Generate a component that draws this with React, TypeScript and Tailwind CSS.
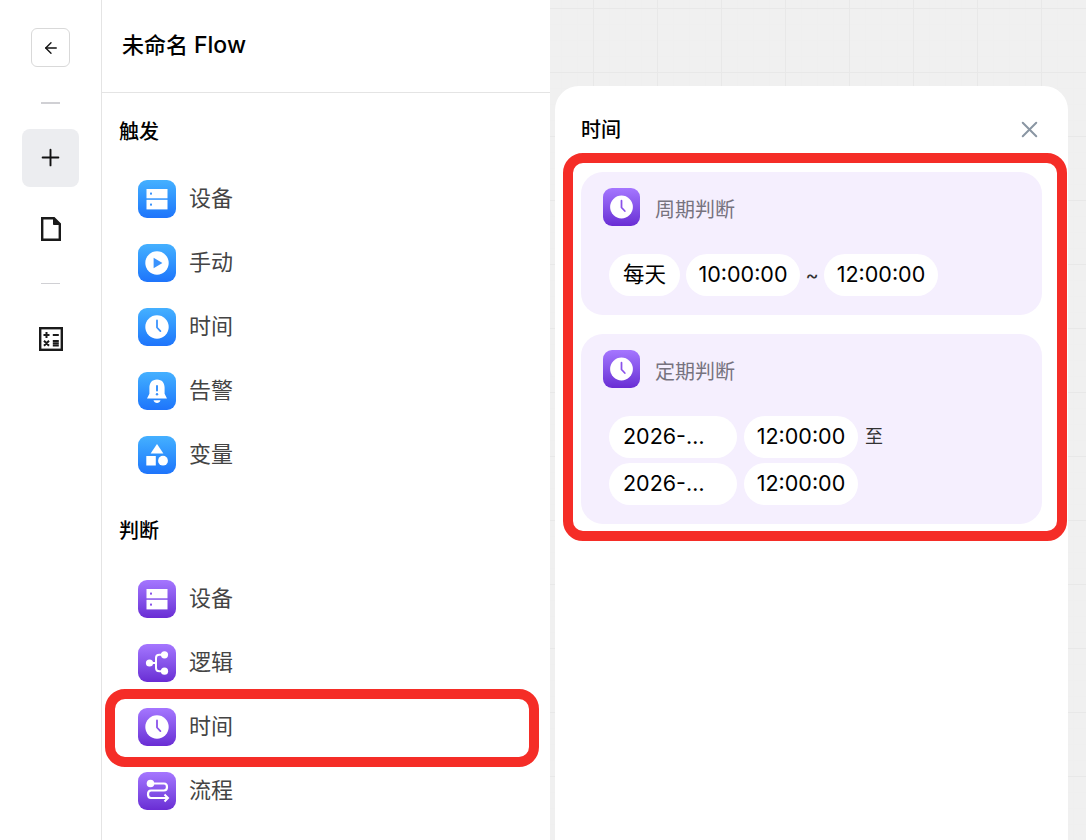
import { ArrowLeft, Plus, X } from "lucide-react";
import type { ReactNode } from "react";

const FONT = "font-['Inter','Noto_Sans_CJK_SC',sans-serif]";

type Tone = "blue" | "purple";

function IconTile({ tone, className, children }: { tone: Tone; className: string; children: ReactNode }) {
	const bg = tone === "blue" ? "bg-gradient-to-b from-[#45b0ff] to-[#1f74fb]" : "bg-gradient-to-b from-[#a576ff] to-[#6a2cd4]";
	return (
		<div className={`flex shrink-0 items-center justify-center rounded-[9px] ${bg} ${className}`}>
			<svg viewBox="0 0 38 38" className="h-full w-full">
				{children}
			</svg>
		</div>
	);
}

function ClockGlyph({ tone }: { tone: Tone }) {
	const c = tone === "blue" ? "#3a93fd" : "#8a52ea";
	return (
		<>
			<circle cx="19" cy="19" r="11.7" fill="#fff" />
			<path d="M19 12.5v7l3.4 3.6" fill="none" stroke={c} strokeWidth="1.8" strokeLinecap="round" strokeLinejoin="round" />
		</>
	);
}

function ServerGlyph({ tone }: { tone: Tone }) {
	const c = tone === "blue" ? "#3a93fd" : "#8a52ea";
	return (
		<>
			<rect x="8.5" y="9" width="21" height="9.3" fill="#fff" />
			<rect x="8.5" y="19.8" width="21" height="9.6" fill="#fff" />
			<rect x="12" y="12.6" width="2" height="2" fill={c} />
			<rect x="12" y="23.6" width="2" height="2" fill={c} />
		</>
	);
}

function PlayGlyph() {
	return (
		<>
			<circle cx="19" cy="19" r="11.7" fill="#fff" />
			<path d="M15.6 13.8 24.4 19l-8.8 5.2z" fill="#3a93fd" />
		</>
	);
}

function BellGlyph() {
	return (
		<>
			<path d="M19 7.500c-5 0-7.600 3.600-7.600 8v6.200L9 26.600h20l-2.400-4.900v-6.200c0-4.400-2.600-8-7.600-8z" fill="#fff" />
			<path d="M15.500 28.200h7c-.5 1.800-1.900 2.800-3.500 2.800s-3-1-3.500-2.800z" fill="#fff" />
			<rect x="18" y="13" width="2" height="6.500" rx="1" fill="#3a93fd" />
			<circle cx="19" cy="22.200" r="1.200" fill="#3a93fd" />
		</>
	);
}

function ShapesGlyph() {
	return (
		<>
			<path d="M19 8l6.400 9.500H12.600z" fill="#fff" />
			<rect x="8.300" y="20" width="9.500" height="9.500" fill="#fff" />
			<circle cx="25" cy="24.700" r="4.900" fill="#fff" />
		</>
	);
}

function BranchGlyph() {
	return (
		<>
			<path d="M11 19h7M26 10.800h-4.700c-2.400 0-3.300 1.200-3.300 3.200v10c0 2 .9 3.200 3.300 3.200H26" fill="none" stroke="#fff" strokeWidth="2" />
			<circle cx="11.500" cy="19" r="3.600" fill="#fff" />
			<circle cx="26.500" cy="10.800" r="3.600" fill="#fff" />
			<circle cx="26.500" cy="27.200" r="3.600" fill="#fff" />
		</>
	);
}

function FlowGlyph() {
	return (
		<>
			<circle cx="12.500" cy="11.500" r="3.800" fill="#fff" />
			<path d="M15 11.500h11c4 0 4 7 0 7H13c-4 0-4 7.500 0 7.500h16" fill="none" stroke="#fff" strokeWidth="2.200" />
			<path d="M26.500 22.500l3.500 3.500-3.500 3.500" fill="none" stroke="#fff" strokeWidth="2" />
		</>
	);
}

function MenuItem({ label, tone, children }: { label: string; tone: Tone; children: ReactNode }) {
	return (
		<div className="flex h-[64px] items-center pl-[36px]">
			<IconTile tone={tone} className="h-[38px] w-[38px]">
				{children}
			</IconTile>
			<span className="mb-[2px] ml-[13px] text-[22px] leading-none text-[#444444]">{label}</span>
		</div>
	);
}

function SectionTitle({ children }: { children: ReactNode }) {
	return <h3 className="pl-[17px] text-[20px] font-medium leading-none text-black">{children}</h3>;
}

function Pill({ className, children }: { className: string; children: ReactNode }) {
	return (
		<div className={`flex h-[42px] shrink-0 items-center rounded-[21px] bg-white text-[21.500px] leading-none text-black ${className}`}>
			{children}
		</div>
	);
}

function CardHeader({ label }: { label: string }) {
	return (
		<div className="flex items-center pl-[22px]">
			<IconTile tone="purple" className="h-[38px] w-[37px]">
				<ClockGlyph tone="purple" />
			</IconTile>
			<span className="ml-[15px] mt-[5px] text-[20px] leading-none text-[#77737f]">{label}</span>
		</div>
	);
}

export default function App() {
	return (
		<div className={`relative flex h-[840px] w-[1086px] overflow-hidden bg-[#f0f0f0] ${FONT}`}>
			{/* Left rail */}
			<div className="flex w-[102px] shrink-0 flex-col items-center border-r border-[#e4e4e4] bg-white pt-[28px]">
				<button className="flex h-[39px] w-[39px] items-center justify-center rounded-[6px] border border-[#d9d9d9] text-[#111111]">
					<ArrowLeft size={18} strokeWidth={1.8} />
				</button>
				<div className="mt-[35px] h-[2px] w-[19px] bg-[#d0d0d4]" />
				<div className="mt-[25px] flex h-[58px] w-[57px] items-center justify-center rounded-[8px] bg-[#ecedf0] pb-[1px] text-[#111111]">
					<Plus size={27} strokeWidth={1.7} />
				</div>
				<svg viewBox="0 0 20 24" className="mt-[30px] h-[24px] w-[20px]" fill="none" stroke="#1a1a1a" strokeWidth="2.400">
					<path d="M1.200 1.200h11.800l5.800 5.800v15.800H1.200z" />
					<path d="M12.500 1.200v6.300h6.300z" fill="#1a1a1a" strokeWidth="1" />
				</svg>
				<div className="mt-[42px] h-px w-[19px] bg-[#d0d0d4]" />
				<svg viewBox="0 0 24 24" className="mt-[43px] h-[24px] w-[24px]" fill="none" stroke="#1a1a1a">
					<rect x="1.200" y="1.200" width="21.600" height="21.600" strokeWidth="2.400" />
					<path d="M4.500 8h6M7.500 5v6M13.800 8h6M5 13.800l5 5M10 13.800l-5 5M13.800 14h6M13.800 16.300h6M13.800 18.600h6" strokeWidth="2" />
				</svg>
			</div>

			{/* Node list */}
			<div className="w-[448px] shrink-0 bg-white">
				<div className="flex h-[92px] items-center pb-[2px] pl-[20px] text-[22px] font-medium leading-none text-black">
					未命名 <span className="ml-[6px] text-[23px]">Flow</span>
				</div>
				<div className="h-px bg-[#e4e4e4]" />
				<div className="pt-[29px]">
					<SectionTitle>触发</SectionTitle>
				</div>
				<div className="mt-[25px]">
					<MenuItem label="设备" tone="blue">
						<ServerGlyph tone="blue" />
					</MenuItem>
					<MenuItem label="手动" tone="blue">
						<PlayGlyph />
					</MenuItem>
					<MenuItem label="时间" tone="blue">
						<ClockGlyph tone="blue" />
					</MenuItem>
					<MenuItem label="告警" tone="blue">
						<BellGlyph />
					</MenuItem>
					<MenuItem label="变量" tone="blue">
						<ShapesGlyph />
					</MenuItem>
				</div>
				<div className="mt-[34px]">
					<SectionTitle>判断</SectionTitle>
				</div>
				<div className="mt-[26px]">
					<MenuItem label="设备" tone="purple">
						<ServerGlyph tone="purple" />
					</MenuItem>
					<MenuItem label="逻辑" tone="purple">
						<BranchGlyph />
					</MenuItem>
					<MenuItem label="时间" tone="purple">
						<ClockGlyph tone="purple" />
					</MenuItem>
					<MenuItem label="流程" tone="purple">
						<FlowGlyph />
					</MenuItem>
				</div>
			</div>

			{/* Canvas with detail panel */}
			<div className="flex-1 bg-[linear-gradient(#e8e8e8_1px,transparent_1px),linear-gradient(90deg,#e8e8e8_1px,transparent_1px),linear-gradient(#efefef_1px,transparent_1px),linear-gradient(90deg,#efefef_1px,transparent_1px)] bg-[size:64px_64px,64px_64px,16px_16px,16px_16px] bg-[position:43px_8px,43px_8px,43px_8px,43px_8px] pl-[5px] pr-[19px] pt-[86px]">
				<div className="h-[754px] rounded-t-[24px] bg-white px-[26px] pt-[32px]">
					<div className="flex h-[24px] items-center justify-between">
						<h2 className="text-[20px] font-medium leading-none text-black">时间</h2>
						<X size={27} strokeWidth={1.8} className="-mr-[1px] -mt-[1px] text-[#8a96a3]" />
					</div>
					<div className="mt-[30px] h-[143px] w-[461px] rounded-[22px] bg-[#f5effe] pt-[16px]">
						<CardHeader label="周期判断" />
						<div className="mt-[28px] flex items-center pl-[28px]">
							<Pill className="w-[71px] justify-center">每天</Pill>
							<Pill className="ml-[6px] w-[114px] justify-center">10:00:00</Pill>
							<span className="w-[24px] text-center text-[20px] leading-none text-[#333333]">~</span>
							<Pill className="w-[114px] justify-center">12:00:00</Pill>
						</div>
					</div>
					<div className="mt-[19px] h-[190px] w-[461px] rounded-[22px] bg-[#f5effe] pt-[16px]">
						<CardHeader label="定期判断" />
						<div className="mt-[28px] flex flex-col gap-[5px] pl-[28px]">
							<div className="flex items-center">
								<Pill className="w-[128px] pl-[14px]">2026-…</Pill>
								<Pill className="ml-[7px] w-[114px] justify-center">12:00:00</Pill>
								<span className="ml-[7px] text-[18px] leading-none text-[#333333]">至</span>
							</div>
							<div className="flex items-center">
								<Pill className="w-[128px] pl-[14px]">2026-…</Pill>
								<Pill className="ml-[7px] w-[114px] justify-center">12:00:00</Pill>
							</div>
						</div>
					</div>
				</div>
			</div>

			{/* Red annotation frames */}
			<div className="absolute left-[105px] top-[689px] h-[78px] w-[434px] rounded-[20px] border-[10px] border-[#f52d27]" />
			<div className="absolute left-[563px] top-[153px] h-[388px] w-[504px] rounded-[20px] border-[10px] border-[#f52d27]" />
		</div>
	);
}
